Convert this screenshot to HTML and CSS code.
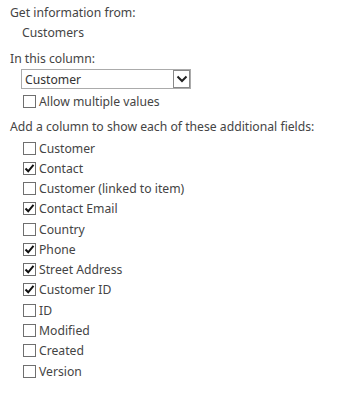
FILE: index.html
```html
<!DOCTYPE html>
<html>
<head>
<meta charset="utf-8">
<link rel="stylesheet" href="styles.css">
</head>
<body>
<div class="panel">
  <div class="label first">Get information from:</div>
  <div class="value">Customers</div>
  <div class="label gap">In this column:</div>
  <div class="select">
    <span class="select-text">Customer</span>
    <span class="select-btn">
      <svg width="12" height="8" viewBox="0 0 12 8"><path d="M1.5 1.5 L6 6 L10.5 1.5" fill="none" stroke="#222" stroke-width="2"/></svg>
    </span>
  </div>
  <div class="row allow"><span class="cb"></span><span>Allow multiple values</span></div>
  <div class="label gap">Add a column to show each of these additional fields:</div>
  <div class="list">
    <div class="row"><span class="cb"></span><span>Customer</span></div>
    <div class="row"><span class="cb checked"><svg width="11" height="11" viewBox="0 0 11 11"><path d="M1.5 5.5 L4.2 8.3 L9.5 1.8" fill="none" stroke="#111" stroke-width="2"/></svg></span><span>Contact</span></div>
    <div class="row"><span class="cb"></span><span>Customer (linked to item)</span></div>
    <div class="row"><span class="cb checked"><svg width="11" height="11" viewBox="0 0 11 11"><path d="M1.5 5.5 L4.2 8.3 L9.5 1.8" fill="none" stroke="#111" stroke-width="2"/></svg></span><span>Contact Email</span></div>
    <div class="row"><span class="cb"></span><span>Country</span></div>
    <div class="row"><span class="cb checked"><svg width="11" height="11" viewBox="0 0 11 11"><path d="M1.5 5.5 L4.2 8.3 L9.5 1.8" fill="none" stroke="#111" stroke-width="2"/></svg></span><span>Phone</span></div>
    <div class="row"><span class="cb checked"><svg width="11" height="11" viewBox="0 0 11 11"><path d="M1.5 5.5 L4.2 8.3 L9.5 1.8" fill="none" stroke="#111" stroke-width="2"/></svg></span><span>Street Address</span></div>
    <div class="row"><span class="cb checked"><svg width="11" height="11" viewBox="0 0 11 11"><path d="M1.5 5.5 L4.2 8.3 L9.5 1.8" fill="none" stroke="#111" stroke-width="2"/></svg></span><span>Customer ID</span></div>
    <div class="row"><span class="cb"></span><span>ID</span></div>
    <div class="row"><span class="cb"></span><span>Modified</span></div>
    <div class="row"><span class="cb"></span><span>Created</span></div>
    <div class="row"><span class="cb"></span><span>Version</span></div>
  </div>
</div>
</body>
</html>
```
FILE: styles.css
```css
html, body {
  margin: 0;
  padding: 0;
  background: #fff;
}
.panel {
  font-family: "Noto Sans", "Open Sans", sans-serif;
  font-size: 12.2px;
  color: #444;
  padding: 3px 0 0 10px;
}
.label {
  line-height: 20px;
  height: 20px;
  white-space: nowrap;
}
.label.gap {
  margin-top: 6px;
}
.value {
  line-height: 20px;
  height: 20px;
  padding-left: 12px;
}
.select {
  margin-left: 11px;
  width: 170px;
  height: 20px;
  box-sizing: border-box;
  border: 1px solid #ababab;
  display: flex;
  align-items: stretch;
  color: #333;
}
.select-text {
  flex: 1;
  line-height: 18px;
  padding-top: 1px;
  padding-left: 3px;
}
.select-btn {
  width: 17px;
  box-sizing: border-box;
  border: 1px solid #888;
  background: #fff;
  display: flex;
  align-items: center;
  justify-content: center;
}
.row {
  display: flex;
  align-items: center;
  height: 20.27px;
  padding-left: 13px;
  white-space: nowrap;
}
.row.allow {
  margin-top: 2px;
  height: 20px;
}
.list {
  margin-top: 1px;
}
.cb {
  width: 13px;
  height: 13px;
  box-sizing: border-box;
  border: 1px solid #6f6f6f;
  background: #fff;
  margin-right: 3px;
  display: flex;
  align-items: center;
  justify-content: center;
  flex: none;
}
```
